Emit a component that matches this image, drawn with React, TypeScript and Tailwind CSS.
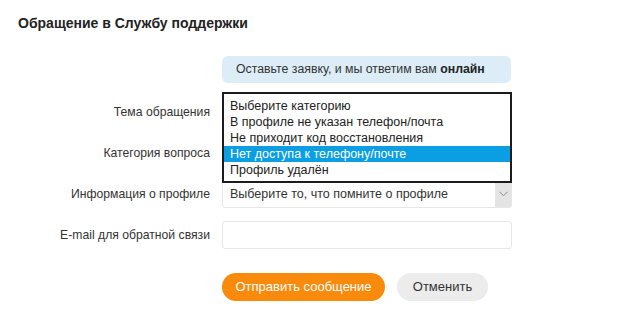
import { useState } from "react";

const topics = [
  "Выберите категорию",
  "В профиле не указан телефон/почта",
  "Не приходит код восстановления",
  "Нет доступа к телефону/почте",
  "Профиль удалён",
];

function Row({ label, children }: { label: string; children: React.ReactNode }) {
  return (
    <div className="flex h-[28px] items-center">
      <div className="w-[210px] shrink-0 text-right text-[12.2px] text-[#333]">{label}</div>
      <div className="relative ml-[12px] h-full w-[290px]">{children}</div>
    </div>
  );
}

export default function App() {
  const [active] = useState(3);

  return (
    <div className="h-[322px] w-[637px] overflow-hidden bg-white font-['Liberation_Sans',Arial,sans-serif] text-[#333]">
      <h1 className="pl-[18px] pt-[14px] text-[14px] font-bold leading-[18px] text-[#222]">
        Обращение в Службу поддержки
      </h1>

      <div className="ml-[222px] mt-[24px] h-[27px] w-[289px] whitespace-nowrap rounded-[6px] bg-[#dcedf8] px-[14px] text-[12.3px] leading-[27px] text-[#333]">
        Оставьте заявку, и мы ответим вам <b className="text-[#222]">онлайн</b>
      </div>

      <div className="mt-[15px] flex flex-col gap-[13px]">
        <Row label="Тема обращения">
          <div className="h-full rounded-[3px] border border-[#e0e0e0]" />
          <ul className="absolute left-0 top-[-6px] z-10 h-[91px] w-[290px] border-2 border-[#1c1c1c] bg-white pt-[4px] text-[12.5px] leading-[16px] text-[#222]">
            {topics.map((t, i) => (
              <li
                key={t}
                className={i === active ? "bg-[#0b9ee3] px-[6px] text-white" : "px-[6px]"}
              >
                {t}
              </li>
            ))}
          </ul>
        </Row>
        <Row label="Категория вопроса">
          <div className="h-full rounded-[3px] border border-[#e0e0e0]" />
        </Row>
        <Row label="Информация о профиле">
          <div className="flex h-full items-center rounded-[3px] border border-[#e6e6e6] pl-[7px] text-[12.5px] text-[#333]">
            <span className="flex-1">Выберите то, что помните о профиле</span>
            <span className="flex h-full w-[16px] items-center justify-center bg-[#e4e4e4]">
              <svg width="9" height="6" viewBox="0 0 9 6" fill="none">
                <path d="M0.5 0.8 4.5 4.8 8.5 0.8" stroke="#8a8a8a" strokeWidth="1" />
              </svg>
            </span>
          </div>
        </Row>
        <Row label="E-mail для обратной связи">
          <div className="h-full rounded-[3px] border border-[#e6e6e6]" />
        </Row>
      </div>

      <div className="ml-[222px] mt-[24px] flex gap-[12px]">
        <button className="h-[28px] w-[163px] rounded-full bg-[#f98a0c] text-[13px] text-white">
          Отправить сообщение
        </button>
        <button className="h-[28px] w-[91px] rounded-full bg-[#ececec] text-[13px] text-[#333]">
          Отменить
        </button>
      </div>
    </div>
  );
}
